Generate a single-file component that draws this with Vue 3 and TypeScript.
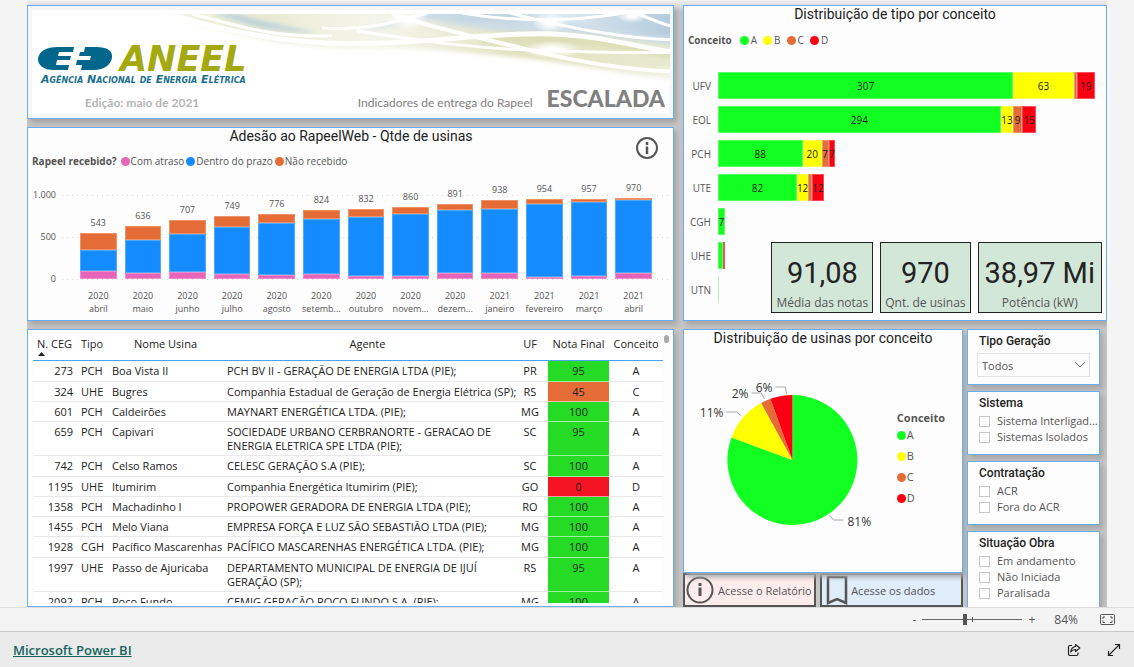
<script setup lang="ts">
interface Month { year: string; label: string; late: number; onTime: number; missing: number }
interface Segment { grade: string; value: number; label?: boolean }
interface Plant { ceg: number; type: string; name: string; agent: string; uf: string; score: number; grade: string }

const months: Month[] = [
  { year: '2020', label: 'abril', late: 96, onTime: 255, missing: 192 },
  { year: '2020', label: 'maio', late: 76, onTime: 390, missing: 170 },
  { year: '2020', label: 'junho', late: 84, onTime: 454, missing: 169 },
  { year: '2020', label: 'julho', late: 64, onTime: 554, missing: 131 },
  { year: '2020', label: 'agosto', late: 52, onTime: 617, missing: 107 },
  { year: '2020', label: 'setemb...', late: 60, onTime: 653, missing: 111 },
  { year: '2020', label: 'outubro', late: 32, onTime: 709, missing: 91 },
  { year: '2020', label: 'novem...', late: 32, onTime: 745, missing: 83 },
  { year: '2020', label: 'dezem...', late: 76, onTime: 749, missing: 66 },
  { year: '2021', label: 'janeiro', late: 68, onTime: 769, missing: 101 },
  { year: '2021', label: 'fevereiro', late: 24, onTime: 872, missing: 58 },
  { year: '2021', label: 'março', late: 40, onTime: 872, missing: 45 },
  { year: '2021', label: 'abril', late: 76, onTime: 860, missing: 34 },
]
const total = (m: Month): number => m.late + m.onTime + m.missing
const tall = (v: number) => ({ height: `${v / 10}%` })

const maxType = 392
const types: { name: string; segments: Segment[] }[] = [
  { name: 'UFV', segments: [{ grade: 'A', value: 307, label: true }, { grade: 'B', value: 63, label: true }, { grade: 'C', value: 3 }, { grade: 'D', value: 19, label: true }] },
  { name: 'EOL', segments: [{ grade: 'A', value: 294, label: true }, { grade: 'B', value: 13, label: true }, { grade: 'C', value: 9, label: true }, { grade: 'D', value: 15, label: true }] },
  { name: 'PCH', segments: [{ grade: 'A', value: 88, label: true }, { grade: 'B', value: 20, label: true }, { grade: 'C', value: 7, label: true }, { grade: 'D', value: 7, label: true }] },
  { name: 'UTE', segments: [{ grade: 'A', value: 82, label: true }, { grade: 'B', value: 12, label: true }, { grade: 'C', value: 4 }, { grade: 'D', value: 12, label: true }] },
  { name: 'CGH', segments: [{ grade: 'A', value: 7, label: true }] },
  { name: 'UHE', segments: [{ grade: 'A', value: 5 }, { grade: 'D', value: 2 }] },
  { name: 'UTN', segments: [{ grade: 'A', value: 1 }] },
]
const wide = (v: number) => ({ width: `${(v / maxType) * 100}%` })

const kpis = [
  { value: '91,08', label: 'Média das notas' },
  { value: '970', label: 'Qnt. de usinas' },
  { value: '38,97 Mi', label: 'Potência (kW)' },
]

const plants: Plant[] = [
  { ceg: 273, type: 'PCH', name: 'Boa Vista II', agent: 'PCH BV II - GERAÇÃO DE ENERGIA LTDA (PIE);', uf: 'PR', score: 95, grade: 'A' },
  { ceg: 324, type: 'UHE', name: 'Bugres', agent: 'Companhia Estadual de Geração de Energia Elétrica (SP);', uf: 'RS', score: 45, grade: 'C' },
  { ceg: 601, type: 'PCH', name: 'Caldeirões', agent: 'MAYNART ENERGÉTICA LTDA. (PIE);', uf: 'MG', score: 100, grade: 'A' },
  { ceg: 659, type: 'PCH', name: 'Capivari', agent: 'SOCIEDADE URBANO CERBRANORTE - GERACAO DE\nENERGIA ELETRICA SPE LTDA (PIE);', uf: 'SC', score: 95, grade: 'A' },
  { ceg: 742, type: 'PCH', name: 'Celso Ramos', agent: 'CELESC GERAÇÃO S.A (PIE);', uf: 'SC', score: 100, grade: 'A' },
  { ceg: 1195, type: 'UHE', name: 'Itumirim', agent: 'Companhia Energética Itumirim (PIE);', uf: 'GO', score: 0, grade: 'D' },
  { ceg: 1358, type: 'PCH', name: 'Machadinho I', agent: 'PROPOWER GERADORA DE ENERGIA LTDA (PIE);', uf: 'RO', score: 100, grade: 'A' },
  { ceg: 1455, type: 'PCH', name: 'Melo Viana', agent: 'EMPRESA FORÇA E LUZ SÃO SEBASTIÃO LTDA (PIE);', uf: 'MG', score: 100, grade: 'A' },
  { ceg: 1928, type: 'CGH', name: 'Pacífico Mascarenhas', agent: 'PACÍFICO MASCARENHAS ENERGÉTICA LTDA. (PIE);', uf: 'MG', score: 100, grade: 'A' },
  { ceg: 1997, type: 'UHE', name: 'Passo de Ajuricaba', agent: 'DEPARTAMENTO MUNICIPAL DE ENERGIA DE IJUÍ\nGERAÇÃO (SP);', uf: 'RS', score: 95, grade: 'A' },
  { ceg: 2092, type: 'PCH', name: 'Poço Fundo', agent: 'CEMIG GERAÇÃO POÇO FUNDO S.A. (PIE);', uf: 'MG', score: 100, grade: 'A' },
]

const shares = [
  { grade: 'A', value: 80.6 },
  { grade: 'B', value: 11.4 },
  { grade: 'C', value: 2.5 },
  { grade: 'D', value: 5.5 },
]
const cx = 96
const cy = 85
const radius = 65
let turned = 0
const slices = shares.map((s) => {
  const a = (turned / 100) * 2 * Math.PI
  turned += s.value
  const b = (turned / 100) * 2 * Math.PI
  const at = (t: number) => `${(cx + radius * Math.sin(t)).toFixed(2)} ${(cy - radius * Math.cos(t)).toFixed(2)}`
  return { grade: s.grade, d: `M${cx} ${cy}L${at(a)}A${radius} ${radius} 0 ${s.value > 50 ? 1 : 0} 1 ${at(b)}Z` }
})

const filters = [
  { title: 'Sistema', options: ['Sistema Interligad...', 'Sistemas Isolados'] },
  { title: 'Contratação', options: ['ACR', 'Fora do ACR'] },
  { title: 'Situação Obra', options: ['Em andamento', 'Não Iniciada', 'Paralisada'] },
]
</script>

<template>
  <div class="page">
    <main class="report">
      <div class="column left">
        <header class="panel banner">
          <svg class="waves" viewBox="0 0 638 102" preserveAspectRatio="none" aria-hidden="true">
            <defs>
              <linearGradient id="olive" x1="0" x2="1" y1="0" y2="0">
                <stop offset="0" stop-color="#dfe0bb" stop-opacity="0.3" />
                <stop offset="0.2" stop-color="#e3e5c8" stop-opacity="0.8" />
                <stop offset="0.42" stop-color="#f0f1e2" stop-opacity="0.7" />
                <stop offset="0.7" stop-color="#e0e2bf" />
                <stop offset="1" stop-color="#e8ead0" />
              </linearGradient>
              <linearGradient id="fade" x1="0" x2="0" y1="0" y2="1">
                <stop offset="0.4" stop-color="#fff" stop-opacity="0" />
                <stop offset="1" stop-color="#fff" stop-opacity="0.9" />
              </linearGradient>
              <linearGradient id="sky" x1="0" x2="1" y1="0" y2="0">
                <stop offset="0" stop-color="#d5e3ea" />
                <stop offset="0.5" stop-color="#c0d3e0" />
                <stop offset="0.62" stop-color="#dfeaf1" />
                <stop offset="1" stop-color="#b3cbdc" />
              </linearGradient>
              <radialGradient id="glow"><stop offset="0.2" stop-color="#fff" /><stop offset="1" stop-color="#fff" stop-opacity="0" /></radialGradient>
              <filter id="soft" x="-5%" y="-20%" width="110%" height="140%"><feGaussianBlur stdDeviation="2" /></filter>
            </defs>
            <g filter="url(#soft)">
              <path d="M126 -4C190 18 250 33 322 35C370 34 410 36 440 40C530 46 570 58 642 68V-4Z" fill="url(#olive)" />
              <path d="M180 0C215 10 235 18 285 19C260 14 225 6 205 0Z" fill="#bfd3da" />
              <path d="M322 17C350 14 365 8 400 -4H642V26C590 20 570 14 518 12C470 14 430 6 395 6C370 8 350 17 322 17Z" fill="url(#sky)" />
              <path d="M395 8C440 14 480 20 520 18C570 22 610 28 642 32V24C590 20 570 10 518 8Z" fill="#cddce6" />
              <path d="M450 22C530 16 590 28 638 40V46C580 32 530 26 450 30Z" fill="#dcdfb4" />
            </g>
            <path d="M318 38C440 38 560 44 638 40V72C560 64 440 44 318 38Z" fill="url(#fade)" />
            <ellipse cx="376" cy="6" rx="22" ry="10" fill="url(#glow)" />
            <ellipse cx="518" cy="9" rx="18" ry="10" fill="url(#glow)" />
            <ellipse cx="600" cy="2" rx="16" ry="7" fill="url(#glow)" />
            <ellipse cx="520" cy="36" rx="30" ry="9" fill="url(#glow)" />
            <g fill="none" stroke="#fff" stroke-width="3">
              <path d="M136 0C190 16 250 30 318 30C400 30 440 20 508 20C560 20 600 32 638 38" stroke-width="5" />
              <path d="M325 17C370 24 440 36 520 37C560 39 600 39 638 39" />
              <path d="M160 0C215 14 240 24 300 22" />
              <path d="M290 14C340 17 360 8 400 -2" />
              <path d="M360 0C400 14 440 22 480 32C540 48 590 56 638 58" stroke-width="4" />
              <path d="M430 -1C480 8 540 8 592 -1" />
              <path d="M478 -1C520 10 580 24 638 26" />
              <path d="M604 -1C616 4 628 9 638 12" />
            </g>
          </svg>
          <div class="brand">
            <svg class="logo" viewBox="0 3 216 44" role="img" aria-label="ANEEL">
              <path d="M20 4H36L35 9H21L20 13H33L32 17H19L18 22H31L30 27H16C5 27 0 22 0 16C1 8 8 4 20 4Z" fill="#00668c" />
              <path d="M47 4H58C69 4 75 8 74 14.500C73 22 66 27 56 27H43L44 22H38L39 17H52L53 13H41L42 9H46Z" fill="#00668c" />
              <text x="82" y="28" class="wordmark">ANEEL</text>
              <text x="3" y="40" class="tagline">Agência Nacional de Energia Elétrica</text>
            </svg>
          </div>
          <div class="captions">
            <span class="edition">Edição: maio de 2021</span>
            <span class="subject">Indicadores de entrega do Rapeel</span>
            <h1>ESCALADA</h1>
          </div>
        </header>

        <section class="panel adoption">
          <h2>Adesão ao RapeelWeb - Qtde de usinas</h2>
          <button class="info" type="button" aria-label="Informações">
            <svg viewBox="0 0 24 24" width="24" height="24"><circle cx="12" cy="12" r="10" fill="none" stroke="#555" stroke-width="2" /><path d="M12 6V9M12 10.500V18" stroke="#555" stroke-width="2.500" /></svg>
          </button>
          <div class="legend">
            <b>Rapeel recebido?</b>
            <span><i class="dot late"></i>Com atraso</span>
            <span><i class="dot on-time"></i>Dentro do prazo</span>
            <span><i class="dot missing"></i>Não recebido</span>
          </div>
          <div class="chart">
            <div class="axis"><span>1.000</span><span>500</span><span>0</span></div>
            <div class="plot">
              <div class="grid-lines"><i></i><i></i><i></i></div>
              <div v-for="(m, n) in months" :key="n" class="month">
                <div class="stack">
                  <span>{{ total(m) }}</span>
                  <i class="missing" :style="tall(m.missing)"></i>
                  <i class="on-time" :style="tall(m.onTime)"></i>
                  <i class="late" :style="tall(m.late)"></i>
                </div>
                <p>{{ m.year }}<br />{{ m.label }}</p>
              </div>
            </div>
          </div>
        </section>

        <section class="panel listing">
          <div class="scroller">
            <table>
              <colgroup><col class="c-ceg" /><col class="c-type" /><col class="c-name" /><col /><col class="c-uf" /><col class="c-score" /><col class="c-grade" /></colgroup>
              <thead>
                <tr>
                  <th class="ceg">N. CEG<svg viewBox="0 0 7 4" width="7" height="4"><path d="M0 4L3.500 0L7 4Z" fill="#222" /></svg></th>
                  <th class="type">Tipo</th><th>Nome Usina</th><th>Agente</th><th>UF</th><th>Nota Final</th><th>Conceito</th>
                </tr>
              </thead>
              <tbody>
                <tr v-for="p in plants" :key="p.ceg">
                  <td class="num">{{ p.ceg }}</td>
                  <td>{{ p.type }}</td>
                  <td class="text">{{ p.name }}</td>
                  <td class="text">{{ p.agent }}</td>
                  <td class="mid">{{ p.uf }}</td>
                  <td class="mid score" :class="'s' + p.grade">{{ p.score }}</td>
                  <td class="mid">{{ p.grade }}</td>
                </tr>
              </tbody>
            </table>
          </div>
          <i class="thumb"></i>
        </section>
      </div>

      <div class="column right">
        <section class="panel by-type">
          <h2>Distribuição de tipo por conceito</h2>
          <div class="legend grades">
            <b>Conceito</b>
            <span v-for="s in shares" :key="s.grade"><i class="dot" :class="'g' + s.grade"></i>{{ s.grade }}</span>
          </div>
          <div class="rows">
            <div v-for="t in types" :key="t.name" class="row">
              <span>{{ t.name }}</span>
              <div class="bar">
                <i v-for="s in t.segments" :key="s.grade" :class="['g' + s.grade, { faint: s.value === 1 }]" :style="wide(s.value)">{{ s.label ? s.value : '' }}</i>
              </div>
            </div>
          </div>
          <div class="kpis">
            <div v-for="k in kpis" :key="k.label" class="kpi"><strong>{{ k.value }}</strong><span>{{ k.label }}</span></div>
          </div>
        </section>

        <div class="lower">
          <div class="pie-column">
            <section class="panel pie">
              <h2>Distribuição de usinas por conceito</h2>
              <div class="pie-body">
                <svg viewBox="0 0 200 170" role="img" aria-label="Distribuição de usinas por conceito">
                  <path v-for="s in slices" :key="s.grade" :d="s.d" :class="'f' + s.grade" />
                  <g fill="none" stroke="#aaa">
                    <path d="M30 37H40L45 41" /><path d="M55 18H65L68 24" /><path d="M79 12H89L90 19" /><path d="M133 140L137 145H147" />
                  </g>
                  <text x="27" y="42" text-anchor="end">11%</text>
                  <text x="52" y="23" text-anchor="end">2%</text>
                  <text x="76" y="17" text-anchor="end">6%</text>
                  <text x="151" y="151">81%</text>
                </svg>
                <div class="legend vertical">
                  <b>Conceito</b>
                  <span v-for="s in shares" :key="s.grade"><i class="dot" :class="'g' + s.grade"></i>{{ s.grade }}</span>
                </div>
              </div>
            </section>
            <div class="actions">
              <button type="button" class="rose">
                <svg viewBox="0 0 28 28" width="28" height="28"><circle cx="14" cy="14" r="12.500" fill="none" stroke="#555" stroke-width="2" /><path d="M14 7V10M14 11.500V20" stroke="#555" stroke-width="3" /></svg>
                Acesse o Relatório
              </button>
              <button type="button" class="blue">
                <svg viewBox="0 0 22 30" width="22" height="30"><path d="M2 2H20V28L11 24L2 28Z" fill="none" stroke="#555" stroke-width="2.500" /></svg>
                Acesse os dados
              </button>
            </div>
          </div>

          <aside class="slicers">
            <div class="panel slicer">
              <label class="heading" for="generation">Tipo Geração</label>
              <div class="picker">
                <select id="generation"><option>Todos</option></select>
                <svg viewBox="0 0 12 7" width="12" height="7"><path d="M1 1L6 6L11 1" fill="none" stroke="#777" /></svg>
              </div>
            </div>
            <fieldset v-for="f in filters" :key="f.title" class="panel slicer">
              <legend class="heading">{{ f.title }}</legend>
              <label v-for="o in f.options" :key="o" class="option"><input type="checkbox" />{{ o }}</label>
            </fieldset>
          </aside>
        </div>
      </div>
    </main>

    <div class="status">
      <button type="button" aria-label="Reduzir">-</button>
      <div class="zoom"><input type="range" min="0" max="100" value="42" aria-label="Zoom" /><i></i></div>
      <button type="button" aria-label="Ampliar">+</button>
      <span class="percent">84%</span>
      <button type="button" class="fit" aria-label="Ajustar à página">
        <svg viewBox="0 0 15 11" width="15" height="11" fill="none" stroke="#555"><rect x="0.500" y="0.500" width="14" height="10" rx="1" /><path d="M5 3H3V5M3 6.500V8.500H5M10 3H12V5M12 6.500V8.500H10" /></svg>
      </button>
    </div>

    <footer class="footer">
      <a href="#">Microsoft Power BI</a>
      <button type="button" aria-label="Compartilhar">
        <svg viewBox="0 0 14 14" width="14" height="14" fill="none" stroke="#222" stroke-width="1.200"><path d="M5 2.500H3Q1.500 2.500 1.500 4V11Q1.500 12.500 3 12.500H9.500Q11 12.500 11 11V9.500" /><path d="M8.500 1.500L12.800 5L8.500 8.500V6.500Q5.500 6.300 3.800 9Q4.300 4 8.500 3.500Z" stroke-linejoin="round" /></svg>
      </button>
      <button type="button" aria-label="Tela inteira">
        <svg viewBox="0 0 14 14" width="14" height="14" fill="none" stroke="#222" stroke-width="1.200"><path d="M1.500 12.500L12.500 1.500M8 1.500H12.500V6M1.500 8V12.500H6" /></svg>
      </button>
    </footer>
  </div>
</template>

<style>
body { background: #f4f4f4; }
</style>

<style scoped>
* { box-sizing: border-box; }
.page { display: flex; flex-direction: column; height: 100vh; min-height: 400px; overflow: hidden; font-family: "Open Sans", "Noto Sans", sans-serif; font-size: 11px; color: #555; }
button { font: inherit; color: inherit; background: none; border: 0; padding: 0; margin: 0; }
button svg { display: block; }
h1, h2, p { margin: 0; }
i { font-style: normal; }
.report { flex: 1; min-height: 0; overflow: hidden; display: grid; grid-template-columns: minmax(0, 647fr) minmax(0, 424fr); grid-template-rows: minmax(0, 1fr); gap: 9px; margin: 0 27px; padding-top: 5px; background: linear-gradient(#f2f2f2, #c6c6c6 12px); }
.column { display: flex; flex-direction: column; gap: 8px; min-height: 0; }
.panel { position: relative; background: #fdfdfd; border: 1px solid #69aef5; box-shadow: 3px 4px 5px #a6a6a6; }
h2 { font-family: Roboto, sans-serif; font-weight: 400; font-size: 14px; line-height: 17px; margin-bottom: 1px; color: #222; text-align: center; }

.banner { padding: 40px 8px 2px 10px; background: #fff; box-shadow: inset 0 0 0 4px #f6f6f6, 3px 4px 5px #a6a6a6; }
.waves { position: absolute; inset: 8px 3px 3px 4px; width: calc(100% - 7px); height: calc(100% - 11px); }
.brand { position: relative; }
.logo { display: block; width: 216px; height: 44px; overflow: visible; margin-bottom: -5px; }
.wordmark { font: italic bold 35px "DejaVu Sans", sans-serif; fill: #a4a910; }
.tagline { font: italic bold 11px "DejaVu Sans", sans-serif; font-variant: small-caps; fill: #1b6f8e; }
.captions { position: relative; display: flex; align-items: baseline; font-family: Lato, sans-serif; color: #808080; line-height: 26px; }
.edition { font-weight: 700; font-size: 12px; color: #b5b5b5; margin: 0 auto 0 47px; }
.subject { font-size: 12px; margin-right: 14px; }
h1 { font-size: 23px; font-weight: 900; line-height: 26px; }

.adoption { padding: 0 3px 5px 4px; }
.info { position: absolute; top: 8px; right: 14px; }
.legend { display: flex; align-items: center; gap: 2px; line-height: 16px; }
.legend b { font-size: 10px; margin-right: 2px; }
.legend span { display: flex; align-items: center; gap: 1px; font-size: 10px; }
.dot { width: 9px; height: 9px; border-radius: 50%; }
.late { background: #e665b8; }
.on-time { background: #148cff; }
.missing { background: #e66c37; }
.adoption .legend { margin-top: 8px; }
.chart { display: flex; margin-top: 20px; font-size: 9px; }
.axis { width: 24px; height: 96px; display: flex; flex-direction: column; justify-content: space-between; line-height: 12px; text-align: right; }
.plot { flex: 1; position: relative; display: flex; margin: 6px 0 0 6px; padding: 0 14px 0 14px; }
.grid-lines { position: absolute; inset: 0 0 auto 0; height: 85px; display: flex; flex-direction: column; justify-content: space-between; }
.grid-lines i { height: 1px; background: repeating-linear-gradient(90deg, #ddd 0 1px, transparent 1px 5px); }
.month { position: relative; flex: 1; text-align: center; }
.stack { height: 84px; display: flex; flex-direction: column; justify-content: flex-end; padding: 0 4px; }
.stack span { line-height: 12px; margin-bottom: 4px; margin-top: -16px; flex: none; font-size: 9px; }
.stack i { flex: none; box-shadow: inset 0 0 0 1px rgba(255, 255, 255, 0.25); }
.month p { margin: 10px -4px 0; line-height: 13px; white-space: nowrap; }

.listing { flex: 1; min-height: 0; padding: 3px 10px 3px 5px; display: flex; }
.scroller { flex: 1; overflow: hidden; background: #fff; }
table { width: 100%; border-collapse: collapse; table-layout: fixed; color: #222; line-height: 14px; font-size: 11px; }
.c-ceg { width: 44px; }
.c-type { width: 31px; }
.c-name { width: 115px; }
.c-uf { width: 36px; }
.c-score { width: 61px; }
.c-grade { width: 54px; }
th { position: relative; height: 27px; font-weight: 400; padding: 0 0 4px; border-bottom: 1px solid #4ba3f5; white-space: nowrap; }
th svg { position: absolute; left: 5px; bottom: 4px; }
.ceg { text-align: right; padding-right: 5px; }
.type { text-align: left; padding-left: 4px; }
td { vertical-align: top; padding: 3px 4px 2px; border-bottom: 1px solid #e8e8e8; }
tbody tr:nth-child(4n + 1) td { padding-bottom: 3px; }
.text { white-space: pre; }
.num { text-align: right; }
.mid { text-align: center; padding-left: 0; padding-right: 0; }
.sA { background: #26db26; border-color: #9ef09e; }
.sC { background: #e66c37; border-color: #f3bda5; }
.sD { background: #f51423; border-color: #fa9aa1; }
.thumb { position: absolute; top: 5px; right: 4px; width: 5px; height: 8px; border-radius: 3px; background: #aaa; }

.gA { background: #12ff22; }
.gB { background: #ffff00; }
.gC { background: #e66c37; }
.gD { background: #fa0012; }
.fA { fill: #12ff22; }
.fB { fill: #ffff00; }
.fC { fill: #e66c37; }
.fD { fill: #fa0012; }
.by-type { padding-bottom: 17px; }
.grades { margin-top: 9px; padding-left: 4px; }
.grades.legend { gap: 6px; }
.grades span { gap: 2px; }
.rows { display: flex; flex-direction: column; gap: 7px; margin-top: 24px; padding: 0 11px 0 4px; }
.row { display: flex; align-items: center; height: 27px; }
.row > span { width: 23px; margin-right: 7px; text-align: right; font-size: 10px; }
.bar { flex: 1; display: flex; height: 27px; }
.bar i { display: flex; align-items: center; justify-content: center; font-size: 10px; color: #222; box-shadow: inset 0 0 0 1px rgba(255, 255, 255, 0.3); }
.faint { opacity: 0.5; }
.kpis { position: absolute; right: 4px; bottom: 7px; display: flex; gap: 7px; }
.kpi { display: flex; flex-direction: column; align-items: center; height: 71px; padding: 10px 4px 0; background: #d3e7d8; border: 1px solid #222; }
.kpi:last-child { padding: 10px 6px 0; }
.kpi strong { font: 400 29px/40px Roboto, sans-serif; color: #222; }
.kpi span { line-height: 20px; font-size: 12px; }

.lower { flex: 1; min-height: 0; display: grid; grid-template-columns: minmax(0, 280fr) minmax(0, 133fr); gap: 4px; padding-right: 7px; }
.pie-column { display: flex; flex-direction: column; min-height: 0; }
.pie { flex: 1; min-height: 0; }
.pie-body { display: flex; align-items: center; padding: 27px 17px 0 12px; }
.pie-body svg { flex: 1; min-width: 0; max-height: 170px; overflow: visible; }
.pie text { font-size: 12px; fill: #333; }
.vertical { flex-direction: column; align-items: flex-start; gap: 5px; margin-bottom: 4px; }
.vertical b { font-size: 11px; margin: 0 0 -4px; }
.vertical span { font-size: 11px; }
.actions { display: flex; gap: 4px; height: 34px; }
.actions button { flex: 134; display: flex; align-items: center; gap: 4px; border: 2px solid #555; white-space: nowrap; padding-left: 1px; }
.actions .blue { flex: 141; padding-left: 4px; gap: 3px; }
.rose { background: #fdecec; }
.blue { background: #dfecf9; }
.slicers { display: flex; flex-direction: column; gap: 6px; min-height: 0; }
.slicer { flex: none; margin: 0; padding: 3px 5px 9px 11px; min-width: 0; }
.heading { display: block; float: left; width: 100%; margin: 0 0 2px; padding: 0; font: 500 12px/16px Roboto, sans-serif; color: #222; }
.picker { clear: both; position: relative; padding-top: 2px; margin: 0 4px -2px -2px; }
select { display: block; width: 100%; height: 24px; appearance: none; background: #fdfdfd; border: 1px solid #e2e2e2; border-radius: 0; padding: 0 4px; font: 11px "Open Sans", sans-serif; color: #555; }
.picker svg { position: absolute; right: 4px; top: 10px; }
.option { clear: both; display: flex; align-items: center; gap: 7px; line-height: 16px; white-space: nowrap; }
.option input { appearance: none; flex: none; width: 11px; height: 11px; margin: 0; border: 1px solid #c8c8c8; background: #fff; }

.status { display: flex; align-items: center; justify-content: flex-end; gap: 6px; height: 24px; padding-right: 19px; border-top: 1px solid #ddd; background: #f4f4f4; font-size: 12px; }
.zoom { position: relative; width: 100px; display: flex; align-items: center; }
.zoom input { appearance: none; width: 100%; height: 11px; margin: 0; background: linear-gradient(#666, #666) center / 100% 1px no-repeat; }
.zoom input::-webkit-slider-thumb { appearance: none; width: 4px; height: 11px; background: #555; }
.zoom i { position: absolute; left: 50%; width: 1px; height: 5px; background: #555; }
.percent { margin: 0 16px 0 13px; font-size: 12px; }
.footer { display: flex; align-items: center; gap: 26px; height: 36px; padding: 0 13px; background: #eaeaea; border-top: 1px solid #c8c8c8; }
.footer a { margin-right: auto; font-size: 13px; font-weight: 600; color: #14655c; }
</style>
